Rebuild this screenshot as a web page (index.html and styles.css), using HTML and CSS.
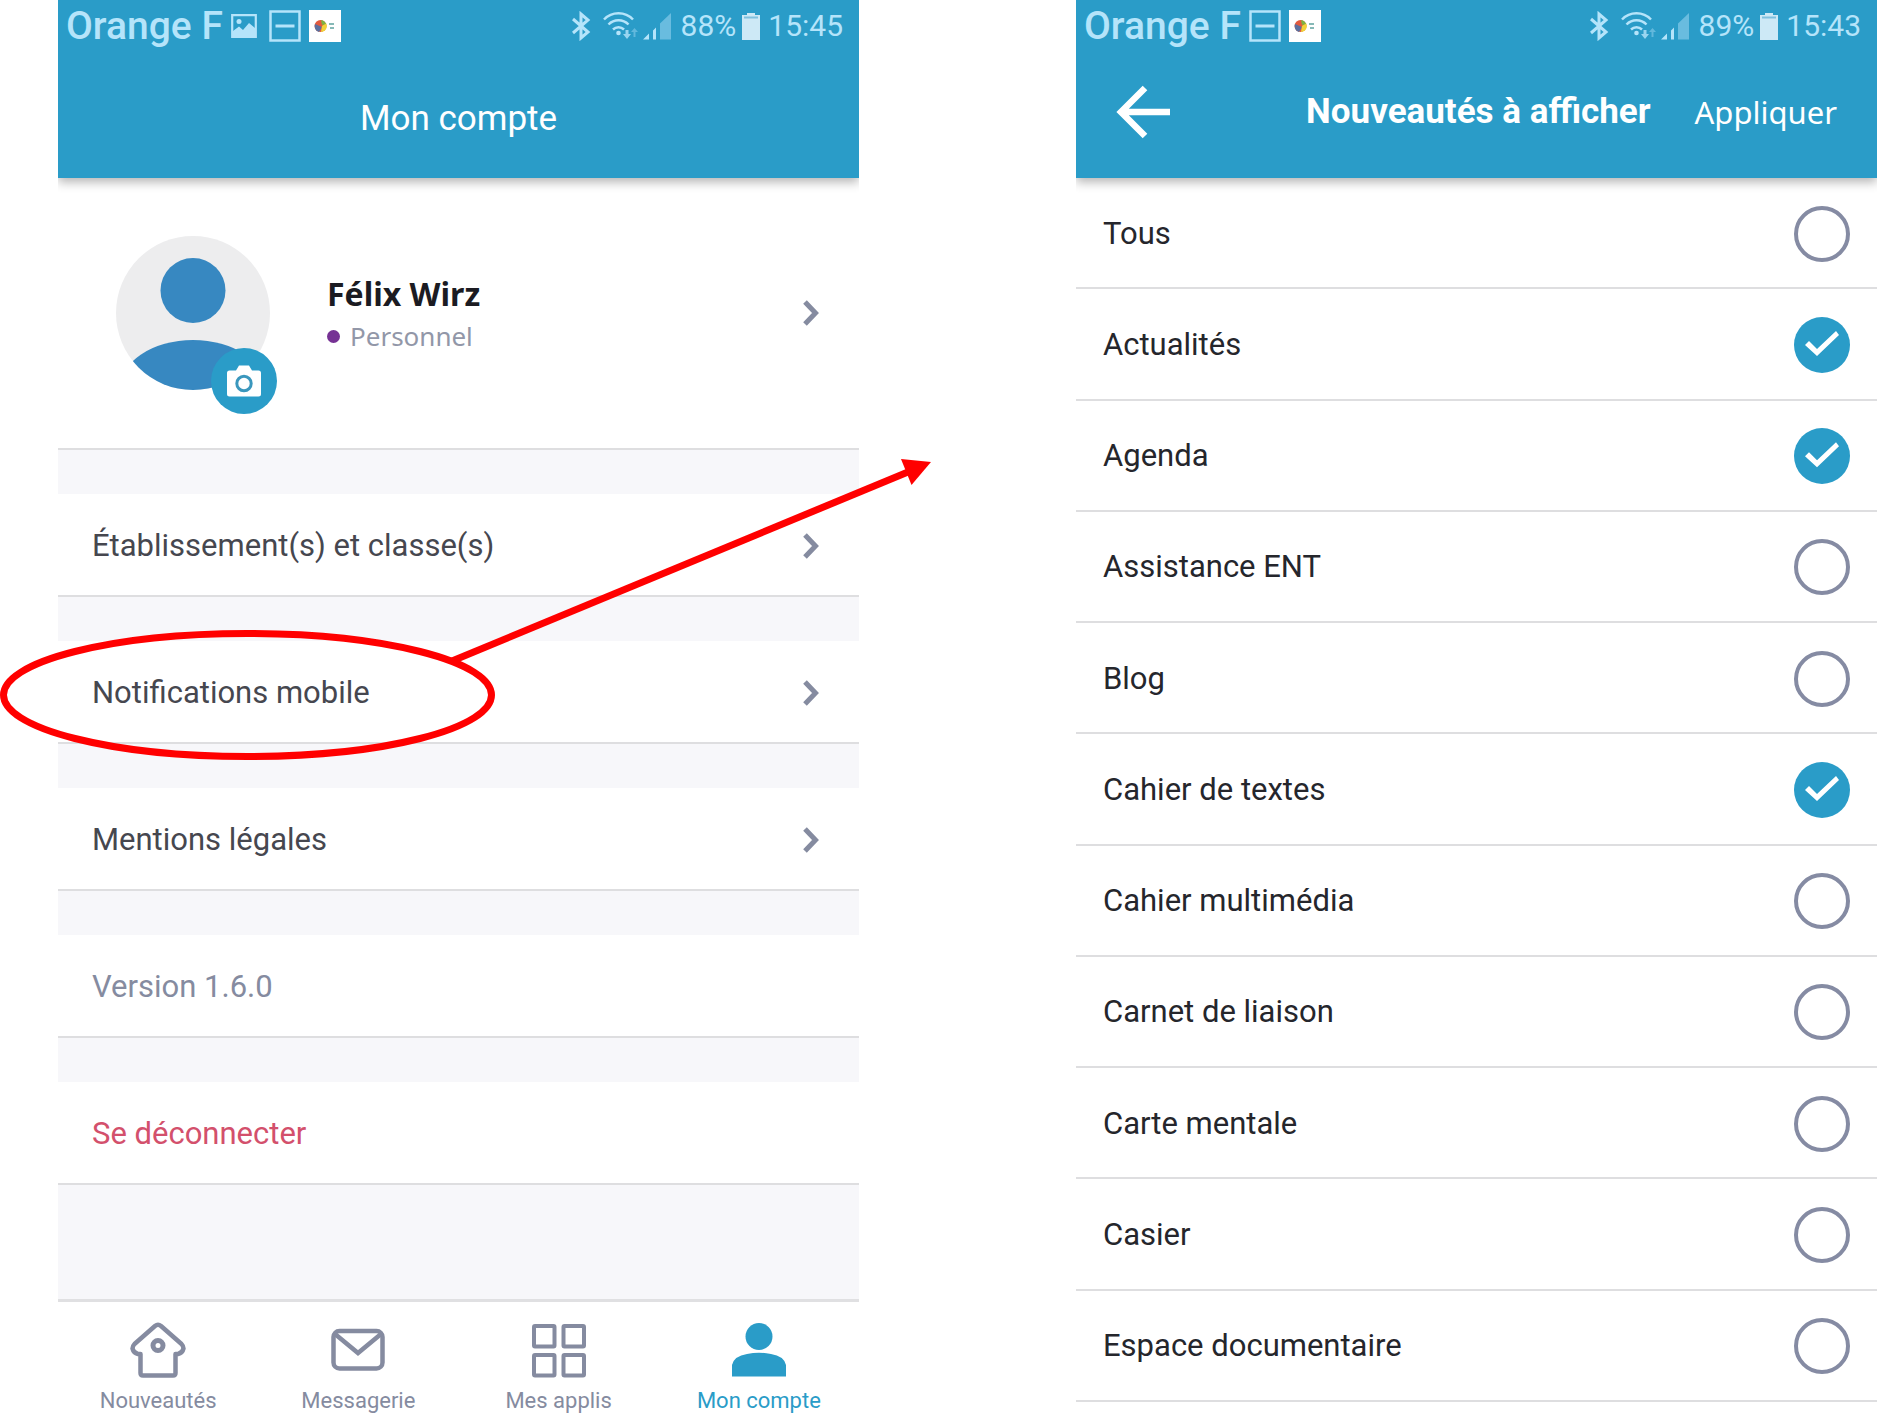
FILE: index.html
```html
<!DOCTYPE html>
<html lang="fr">
<head>
<meta charset="utf-8">
<meta name="viewport" content="width=device-width, initial-scale=1">
<title>Mon compte – Nouveautés à afficher</title>
<link rel="stylesheet" href="styles.css">
</head>
<body>
<svg class="sprite" aria-hidden="true">
  <symbol id="i-dash" viewBox="0 0 32 32"><rect x="1.5" y="1.5" width="29" height="29" fill="none" stroke="currentColor" stroke-width="2.5"/><path d="M6.500 16h19" stroke="currentColor" stroke-width="3"/></symbol>
  <symbol id="i-app" viewBox="0 0 32 32"><path fill="#fff" d="M0 0h32v32H0z"/><circle cx="11.500" cy="16" r="6" fill="#e2593d"/><path d="M6 14a6 6 0 0 0 4 8l3-5z" fill="#5b6f9e"/><path d="M12 22a6 6 0 0 0 5-9l-4 3z" fill="#f0d23a"/><path d="M12 10a6 6 0 0 1 5 4l-4 1z" fill="#7cb342"/><path d="M20 14h5M21 18h4" stroke="#5fa3a0" stroke-width="1.500"/></symbol>
  <symbol id="i-bt" viewBox="0 0 20 30"><path d="M2 8l15 13-7 6V3l7 6L2 22" fill="none" stroke="currentColor" stroke-width="3"/></symbol>
  <symbol id="i-wifi" viewBox="0 0 36 30"><g fill="none" stroke="currentColor" stroke-width="2.500"><path d="M1 8.500a20 20 0 0 1 29 0M5.500 13.500a14 14 0 0 1 20 0M10 18.500a8 8 0 0 1 11 0"/></g><circle cx="15.500" cy="22" r="2.300" fill="currentColor"/><path d="M22.500 19h3v4h2.500l-4 5-4-5h2.500z" fill="currentColor" opacity=".8"/><path d="M30.500 26h2v-5h2.500l-3.500-4-3.500 4h2.500z" fill="currentColor" opacity=".4"/></symbol>
  <symbol id="i-signal" viewBox="0 0 28 30"><path d="M0 28.500l6-6v6zM10 19.500l3-3v12h-3z" fill="currentColor"/><path d="M17 12.500L28 2v26.500H17z" fill="currentColor" opacity=".45"/></symbol>
  <symbol id="i-battery" viewBox="0 0 18 28"><path d="M5 1h8v2h5v25H0V3h5z" fill="#cde9f6"/><path d="M2 5.500h14" stroke="#7fc0de" stroke-width="2"/></symbol>
  <symbol id="i-chevron" viewBox="0 0 16 26"><path d="M2 2l10.500 11L2 24" fill="none" stroke="currentColor" stroke-width="5"/></symbol>
</svg>

<main class="stage">
  <section class="phone" aria-label="Mon compte">
    <header class="header">
      <div class="status">
        <span class="carrier">Orange F</span>
        <svg class="ic-picture" viewBox="0 0 26 24"><path d="M1.200 1.200h23.600v21.600H1.200z" fill="none" stroke="currentColor" stroke-width="2.200"/><circle cx="8" cy="7.500" r="2.500" fill="currentColor"/><path d="M2 17l6-4.500 4 3.500 6-7 6 5v9H2z" fill="currentColor"/></svg>
        <svg class="ic-box"><use href="#i-dash"/></svg>
        <svg class="ic-box"><use href="#i-app"/></svg>
        <svg class="ic-bt"><use href="#i-bt"/></svg>
        <svg class="ic-wifi"><use href="#i-wifi"/></svg>
        <svg class="ic-signal"><use href="#i-signal"/></svg>
        <span class="meter">88%</span>
        <svg class="ic-battery"><use href="#i-battery"/></svg>
        <span class="meter">15:45</span>
      </div>
      <div class="titlebar titlebar-center"><h1 class="title">Mon compte</h1></div>
    </header>

    <div class="account">
      <a class="profile" href="#profil">
        <span class="avatar">
          <svg class="avatar-face" viewBox="0 0 154 154"><defs><clipPath id="disc"><circle cx="77" cy="77" r="77"/></clipPath></defs><circle cx="77" cy="77" r="77" fill="#ededee"/><g fill="#3788c1"><circle cx="77" cy="54.500" r="32.500"/><ellipse cx="77" cy="154" rx="74" ry="50" clip-path="url(#disc)"/></g></svg>
          <svg class="avatar-camera" viewBox="0 0 66 66"><circle cx="33" cy="33" r="33" fill="#2a9cc8"/><path d="M18.500 22.500H25l3-5h10l3 5h6.500a2.500 2.500 0 0 1 2.500 2.500v21a2.500 2.500 0 0 1-2.500 2.500h-29A2.500 2.500 0 0 1 16 46V25a2.500 2.500 0 0 1 2.500-2.500z" fill="#fff"/><circle cx="33" cy="35.500" r="7.200" fill="#fff" stroke="#3a97bd" stroke-width="3"/></svg>
        </span>
        <span class="identity">
          <strong class="name">Félix Wirz</strong>
          <span class="role">Personnel</span>
        </span>
        <svg class="chevron"><use href="#i-chevron"/></svg>
      </a>
      <a class="item" href="#classes">Établissement(s) et classe(s)<svg class="chevron"><use href="#i-chevron"/></svg></a>
      <div class="marked">
        <a class="item" href="#notifications">Notifications mobile<svg class="chevron"><use href="#i-chevron"/></svg></a>
        <svg class="callout" viewBox="0 0 936 304" aria-hidden="true"><ellipse cx="247.500" cy="237" rx="244" ry="61.500" fill="none" stroke="red" stroke-width="7"/><path d="M452 203L908 14" stroke="red" stroke-width="7"/><path d="M931 4l-30-3 10.500 26z" fill="red"/></svg>
      </div>
      <a class="item" href="#mentions">Mentions légales<svg class="chevron"><use href="#i-chevron"/></svg></a>
      <p class="item item-muted">Version 1.6.0</p>
      <button class="item item-danger" type="button">Se déconnecter</button>
    </div>

    <nav class="tabs" aria-label="Navigation">
      <a class="tab" href="#nouveautes"><svg class="tab-icon" viewBox="0 0 56 56"><path d="M10.500 32H8q-4.500-1-5.500-5.500 0-2.500 2-4.500L25 4q3-2.500 6 0l20.500 18q2 2 2 4.500Q52.500 31 48 32h-2.500v19q0 2.500-2.500 2.500H13q-2.500 0-2.500-2.500z" fill="none" stroke="currentColor" stroke-width="4.500" stroke-linejoin="round"/><circle cx="28" cy="23.500" r="5" fill="none" stroke="currentColor" stroke-width="5"/></svg>Nouveautés</a>
      <a class="tab" href="#messagerie"><svg class="tab-icon" viewBox="0 0 56 56"><rect x="3.500" y="9" width="49" height="37.500" rx="6" fill="none" stroke="currentColor" stroke-width="4.500"/><path d="M5 12l23 19 23-19" fill="none" stroke="currentColor" stroke-width="4.500"/></svg>Messagerie</a>
      <a class="tab" href="#applis"><svg class="tab-icon" viewBox="0 0 56 56"><g fill="none" stroke="currentColor" stroke-width="4"><rect x="3" y="4" width="20.500" height="20.500" rx="1"/><rect x="32.500" y="4" width="20.500" height="20.500" rx="1"/><rect x="3" y="33" width="20.500" height="20.500" rx="1"/><rect x="32.500" y="33" width="20.500" height="20.500" rx="1"/></g></svg>Mes applis</a>
      <a class="tab tab-active" href="#compte" aria-current="page"><svg class="tab-icon" viewBox="0 0 56 56"><g fill="currentColor"><circle cx="28" cy="14.500" r="13.500"/><path d="M1 54.500V43q2-9 15-11 12-2.500 24 0 13 2 15 11v11.500z"/></g></svg>Mon compte</a>
    </nav>
  </section>

  <section class="phone" aria-label="Nouveautés à afficher">
    <header class="header">
      <div class="status">
        <span class="carrier">Orange F</span>
        <svg class="ic-box"><use href="#i-dash"/></svg>
        <svg class="ic-box"><use href="#i-app"/></svg>
        <svg class="ic-bt"><use href="#i-bt"/></svg>
        <svg class="ic-wifi"><use href="#i-wifi"/></svg>
        <svg class="ic-signal"><use href="#i-signal"/></svg>
        <span class="meter">89%</span>
        <svg class="ic-battery"><use href="#i-battery"/></svg>
        <span class="meter">15:43</span>
      </div>
      <div class="titlebar">
        <button class="back" type="button" aria-label="Retour"><svg class="back-icon" viewBox="0 0 54 54"><path d="M54 27H5M29 3L5 27l24 24" fill="none" stroke="currentColor" stroke-width="6.500"/></svg></button>
        <h2 class="title title-bold">Nouveautés à afficher</h2>
        <button class="apply" type="button">Appliquer</button>
      </div>
    </header>
    <div class="filters">
      <label class="filter">Tous<input class="check" type="checkbox"></label>
      <label class="filter">Actualités<input class="check" type="checkbox" checked></label>
      <label class="filter">Agenda<input class="check" type="checkbox" checked></label>
      <label class="filter">Assistance ENT<input class="check" type="checkbox"></label>
      <label class="filter">Blog<input class="check" type="checkbox"></label>
      <label class="filter">Cahier de textes<input class="check" type="checkbox" checked></label>
      <label class="filter">Cahier multimédia<input class="check" type="checkbox"></label>
      <label class="filter">Carnet de liaison<input class="check" type="checkbox"></label>
      <label class="filter">Carte mentale<input class="check" type="checkbox"></label>
      <label class="filter">Casier<input class="check" type="checkbox"></label>
      <label class="filter">Espace documentaire<input class="check" type="checkbox"></label>
    </div>
  </section>
</main>
</body>
</html>
```
FILE: styles.css
```css
* { box-sizing: border-box; }

body {
  margin: 0;
  background: #fff;
  color: #25262c;
  font: 31px/36px Roboto, sans-serif;
}

a { color: inherit; text-decoration: none; }
h1, h2, p { margin: 0; }
button { margin: 0; padding: 0; border: 0; background: none; color: inherit; font: inherit; text-align: left; }
svg { display: block; flex: none; }
.sprite { position: absolute; width: 0; height: 0; }

.stage {
  display: grid;
  grid-template-columns: 1fr 1fr;
  column-gap: 217px;
  min-height: 100vh;
  padding-left: 58px;
}

.phone { display: flex; flex-direction: column; min-width: 0; }

/* Header */
.header {
  position: relative;
  height: 178px;
  background: #2a9cc8;
  color: #fff;
  box-shadow: 0 4px 10px rgba(0, 0, 0, .3);
  clip-path: inset(0 0 -16px 0);
}
.status {
  display: flex;
  align-items: center;
  height: 52px;
  padding: 0 16px 0 8px;
  color: #b5e4fa;
}
.carrier { margin-right: 8px; font-size: 39px; font-weight: 500; }
.ic-picture { width: 26px; height: 24px; margin-right: 12px; }
.ic-box { width: 32px; height: 32px; margin-right: 8px; }
.ic-bt { width: 20px; height: 30px; margin: 0 12px 0 auto; }
.ic-wifi { width: 36px; height: 30px; margin-right: 4px; }
.ic-signal { width: 28px; height: 30px; margin-right: 10px; }
.meter { font-size: 30px; }
.ic-battery { width: 18px; height: 28px; margin: 0 8px 0 6px; }

.titlebar { display: flex; align-items: center; height: 120px; padding: 0 40px; }
.titlebar-center { height: 134px; justify-content: center; }
.title { font-size: 35px; font-weight: 400; }
.title-bold { margin-left: auto; font-weight: 700; }
.back-icon { width: 54px; height: 54px; }
.apply { margin-left: 44px; font-family: "Noto Sans", sans-serif; font-size: 31px; }

/* Account page */
.account {
  display: flex;
  flex: 1;
  flex-direction: column;
  gap: 44px;
  padding-bottom: 44px;
  background: #f7f7fa;
  color: #46474f;
}
.profile, .item {
  display: flex;
  align-items: center;
  width: 100%;
  border-bottom: 2px solid #dedee0;
  background: #fff;
}
.profile { height: 272px; padding: 0 40px 0 58px; }
.item { height: 103px; padding: 2px 40px 0 34px; }
.item-muted { color: #858ba0; }
.item-danger { color: #d3506c; }
.chevron { width: 16px; height: 26px; margin-left: auto; color: #858ba0; }

.avatar { position: relative; margin-right: 57px; }
.avatar-face { width: 154px; height: 154px; }
.avatar-camera { position: absolute; right: -7px; bottom: -24px; width: 66px; height: 66px; }
.identity { display: flex; flex-direction: column; padding-top: 2px; font-family: "Noto Sans", sans-serif; }
.name { color: #1b1b22; font-size: 32px; line-height: 44px; }
.role { display: flex; align-items: center; gap: 10px; color: #9297a8; font-size: 26px; line-height: 40px; }
.role::before { content: ""; width: 13px; height: 13px; border-radius: 50%; background: #763294; }

/* Highlight on the notifications row, pointing to the second screen */
.marked { position: relative; z-index: 1; }
.callout { position: absolute; left: -58px; bottom: -18px; width: 936px; height: 304px; pointer-events: none; }

/* Bottom tabs */
.tabs {
  display: grid;
  grid-template-columns: repeat(4, 1fr);
  height: 125px;
  border-top: 3px solid #e0e0e2;
  background: #fff;
  color: #858ba0;
  font-size: 22px;
  line-height: 28px;
}
.tab { display: flex; flex-direction: column; align-items: center; gap: 9px; padding-top: 20px; }
.tab-icon { width: 56px; height: 56px; }
.tab-active { color: #2a9cc8; }

/* Filter list */
.filters { display: flex; flex: 1; flex-direction: column; padding-bottom: 22px; }
.filter {
  display: flex;
  flex: 1;
  align-items: center;
  justify-content: space-between;
  min-height: 80px;
  padding: 2px 27px 0;
  border-bottom: 2px solid #dedee0;
}
.check {
  flex: none;
  width: 56px;
  height: 56px;
  margin: 0;
  border: 4px solid #858ba3;
  border-radius: 50%;
  appearance: none;
}
.check:checked { border: 0; background: #2a9cc8; }
.check:checked::before {
  content: "";
  display: block;
  width: 56px;
  height: 56px;
  background: #fff;
  clip-path: polygon(11px 28px, 15px 24px, 23px 32px, 42px 14px, 45px 18px, 23px 39px);
}
```
